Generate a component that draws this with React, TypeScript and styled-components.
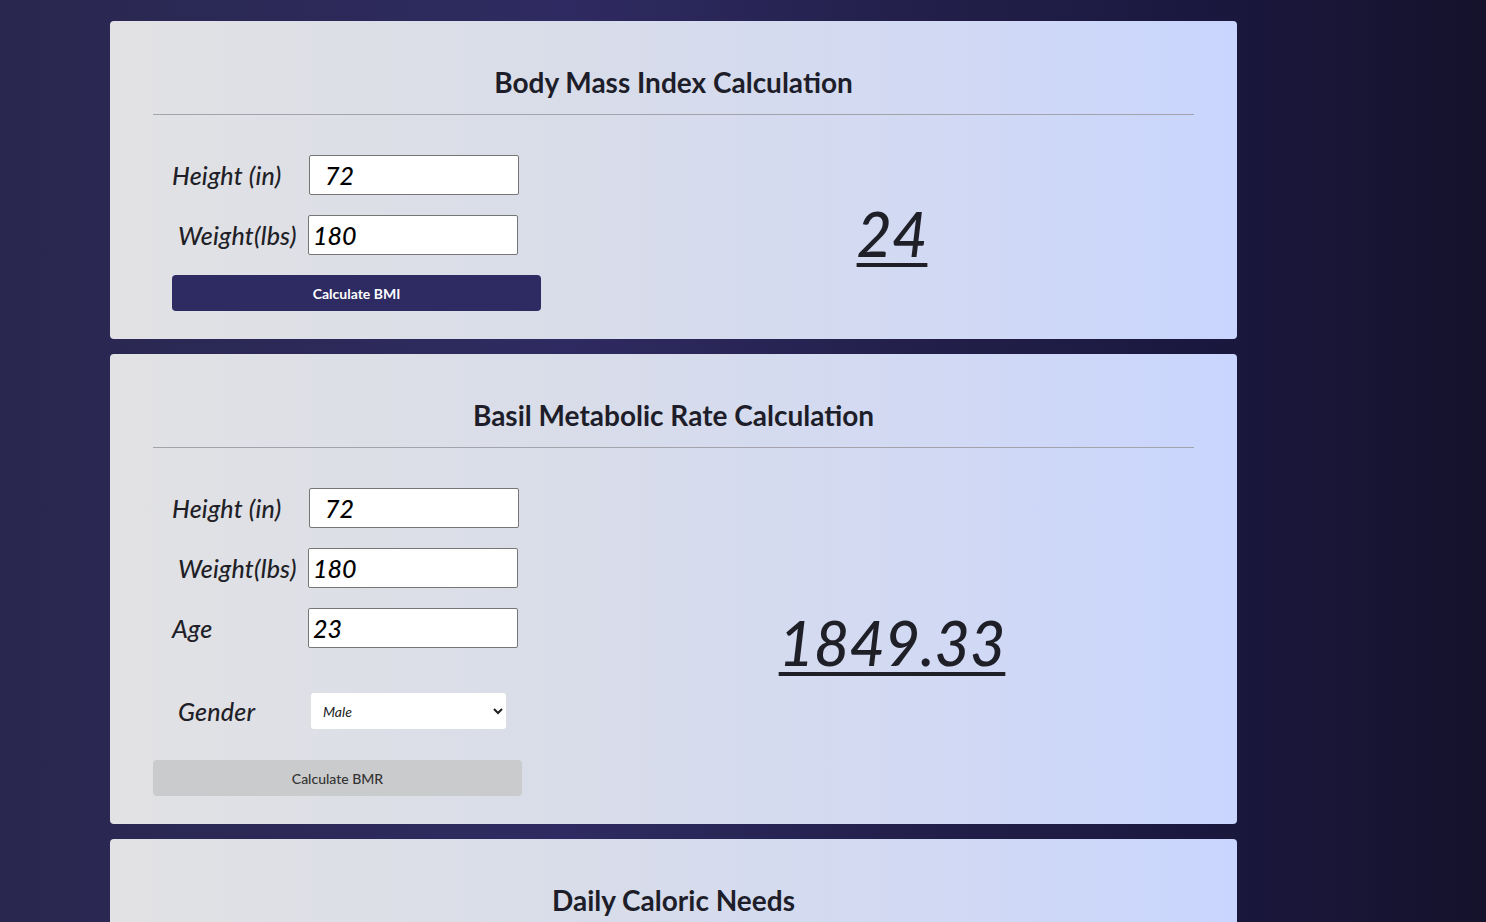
import React from "react";
import styled, { createGlobalStyle } from "styled-components";

const Global = createGlobalStyle`
  html, body { margin: 0; padding: 0; }
  body {
    font-family: Lato, "Open Sans", sans-serif;
    background: linear-gradient(to right, #29274f 0%, #2c2958 20%, #2f2b62 38%, #221f4a 62%, #1b1840 80%, #15122c 100%);
    min-height: 100vh;
  }
`;

const Page = styled.main`
  width: 1127px;
  margin-left: 110px;
  padding-top: 21px;
  display: flex;
  flex-direction: column;
  gap: 15px;
`;

const Card = styled.section<{ $bottom?: number }>`
  background: linear-gradient(to right, #e2e2e4 0%, #d9dde9 40%, #d1d9f4 75%, #c9d5fe 100%);
  border-radius: 4px;
  padding: 44px 43px ${(p) => p.$bottom ?? 28}px;
`;

const Title = styled.h2`
  margin: 0;
  font-family: Lato, sans-serif;
  font-weight: 700;
  font-size: 28px;
  line-height: 34px;
  color: #1e1e2a;
  text-align: center;
`;

const Rule = styled.hr`
  margin: 15px 0 40px;
  border: 0;
  height: 1px;
  background: #a3a4ab;
`;

const Body = styled.div`
  display: grid;
  grid-template-columns: 437px 1fr;
  align-items: center;
`;

const Form = styled.div<{ $indent: number }>`
  display: flex;
  flex-direction: column;
  gap: 20px;
  padding-left: ${(p) => p.$indent}px;
`;

const Row = styled.div<{ $top?: number }>`
  display: flex;
  align-items: center;
  margin-top: ${(p) => p.$top ?? 0}px;
`;

const Label = styled.label<{ $shift: number; $width: number }>`
  width: ${(p) => p.$width - p.$shift}px;
  padding-left: ${(p) => p.$shift}px;
  font-family: Lato, sans-serif;
  font-style: italic;
  font-weight: 500;
  font-size: 25px;
  color: #1f1f28;
  letter-spacing: 0.2px;
  white-space: nowrap;
`;

const Input = styled.input<{ $pad: number }>`
  box-sizing: border-box;
  width: 210px;
  height: 40px;
  border: 1px solid #767676;
  border-radius: 2px;
  background: #fff;
  padding: 0 0 0 ${(p) => p.$pad}px;
  font-family: Lato, sans-serif;
  font-style: italic;
  font-weight: 500;
  font-size: 25px;
  color: #000;
  outline: none;
`;

const Select = styled.select`
  box-sizing: border-box;
  width: 195px;
  height: 36px;
  border: 0;
  border-radius: 3px;
  background: #fff;
  padding: 0 6px 0 8px;
  font-family: Lato, sans-serif;
  font-style: italic;
  font-size: 14px;
  color: #222;
`;

const Button = styled.button<{ $primary?: boolean }>`
  box-sizing: border-box;
  width: 369px;
  height: 36px;
  border: 0;
  border-radius: 4px;
  background: ${(p) => (p.$primary ? "#2e2a62" : "#cacbcd")};
  color: ${(p) => (p.$primary ? "#ffffff" : "#333333")};
  font-family: Lato, sans-serif;
  font-weight: ${(p) => (p.$primary ? 700 : 500)};
  font-size: 14px;
  cursor: pointer;
`;

const Result = styled.div`
  text-align: center;
  font-family: Lato, sans-serif;
  font-style: italic;
  font-weight: 500;
  font-size: 61px;
  color: #1f1f28;
  text-decoration: underline;
  text-decoration-thickness: 4px;
  text-underline-offset: 6px;
`;

export default function App() {
  return (
    <>
      <Global />
      <Page>
        <Card>
          <Title>Body Mass Index Calculation</Title>
          <Rule />
          <Body>
            <Form $indent={19}>
              <Row>
                <Label $shift={0} $width={137}>Height (in)</Label>
                <Input $pad={15} defaultValue="72" />
              </Row>
              <Row>
                <Label $shift={6} $width={136}>Weight(lbs)</Label>
                <Input $pad={4} defaultValue="180" />
              </Row>
              <Row>
                <Button $primary>Calculate BMI</Button>
              </Row>
            </Form>
            <Result>24</Result>
          </Body>
        </Card>
        <Card $bottom={28}>
          <Title>Basil Metabolic Rate Calculation</Title>
          <Rule />
          <Body>
            <Form $indent={0}>
              <Row>
                <Label $shift={19} $width={156}>Height (in)</Label>
                <Input $pad={15} defaultValue="72" />
              </Row>
              <Row>
                <Label $shift={25} $width={155}>Weight(lbs)</Label>
                <Input $pad={4} defaultValue="180" />
              </Row>
              <Row>
                <Label $shift={19} $width={155}>Age</Label>
                <Input $pad={4} defaultValue="23" />
              </Row>
              <Row $top={25}>
                <Label $shift={25} $width={158}>Gender</Label>
                <Select defaultValue="Male">
                  <option>Male</option>
                  <option>Female</option>
                </Select>
              </Row>
              <Row $top={11}>
                <Button>Calculate BMR</Button>
              </Row>
            </Form>
            <Result>1849.33</Result>
          </Body>
        </Card>
        <Card>
          <Title>Daily Caloric Needs</Title>
          <Rule />
        </Card>
      </Page>
    </>
  );
}
